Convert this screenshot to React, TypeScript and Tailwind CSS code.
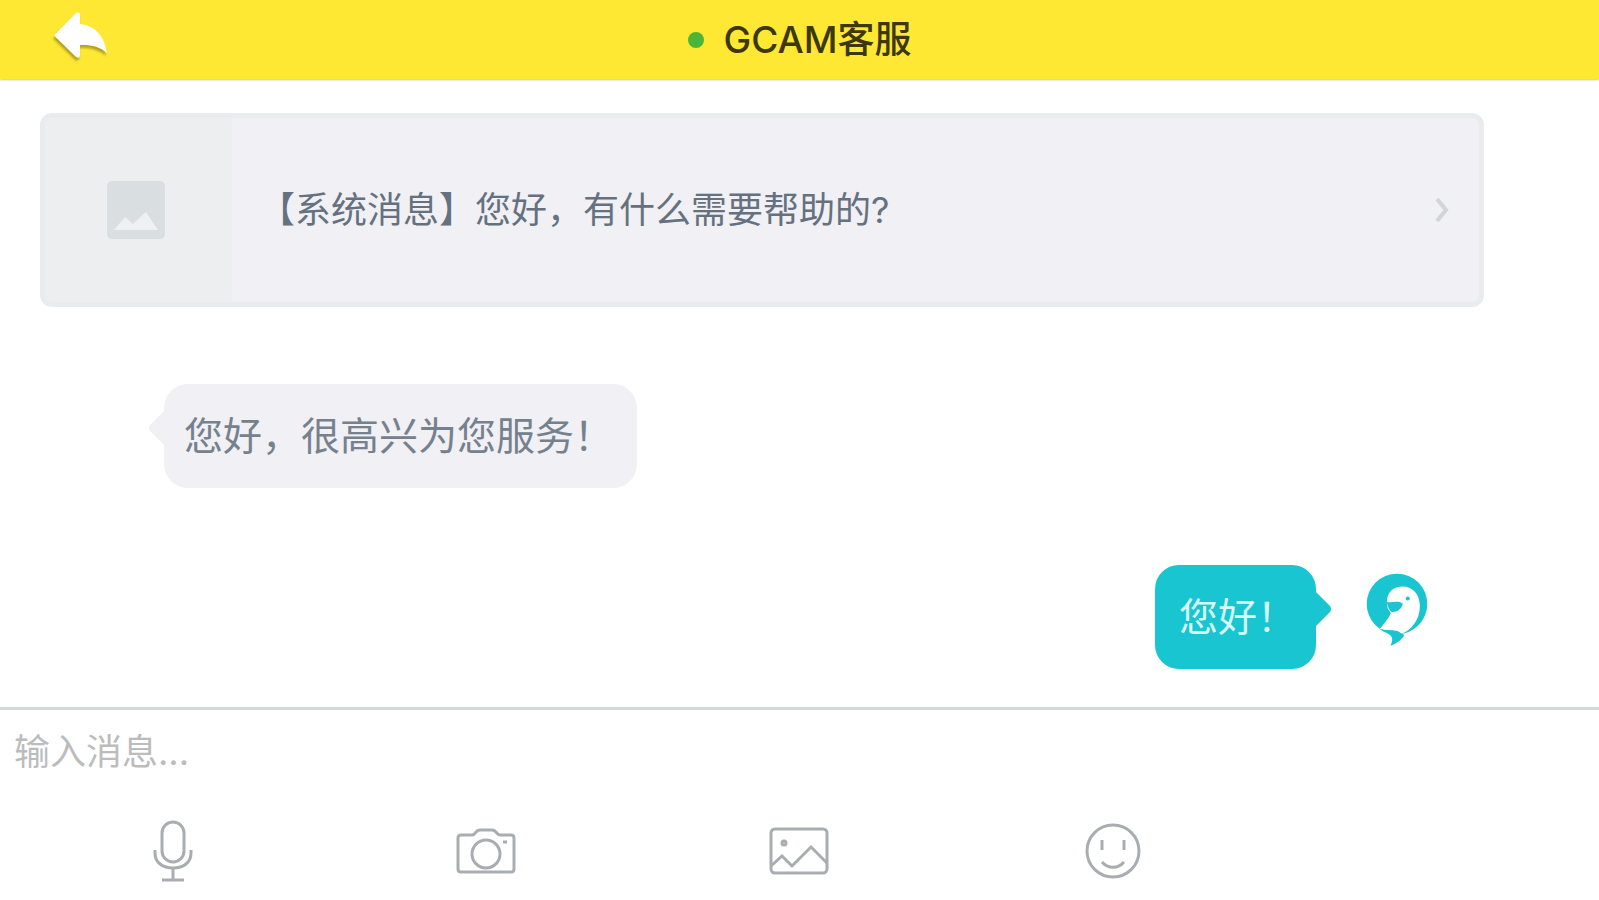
import React, { useState } from 'react';

function ReplyArrowIcon() {
  return (
    <svg viewBox="0 0 54 48" className="w-[54px] h-12 drop-shadow-[-1px_3px_1px_rgba(110,95,0,0.5)]" fill="#fff" aria-hidden="true">
      <path d="M0 23.5 21.5 1.5C24 -.5 26 .5 26 3.500V12C41 13.500 50.500 24 53 41C45.500 34.500 37 32.500 26 33V42.500C26 46 23.500 46.500 21.500 44.500Z" />
    </svg>
  );
}

function PlaceholderIcon() {
  return (
    <svg viewBox="0 0 58 58" className="w-[58px] h-[58px]" aria-hidden="true">
      <rect width="58" height="58" rx="5" fill="#d9dee1" />
      <path d="M7 49 18 36 26 43 39 31 51 49Z" fill="#eef0f2" />
    </svg>
  );
}

function BirdAvatar() {
  return (
    <svg viewBox="18 22 184 220" className="w-[62px] h-[74px] mt-2 shrink-0" role="img" aria-label="avatar">
      <circle cx="110" cy="114" r="90" fill="#18c5d0" />
      {/* head and body */}
      <path
        d="M80 108C80 78 100 62 126 62C158 62 178 86 178 120C178 160 154 192 122 203C112 192 90 194 58 190C70 174 84 160 92 141C84 134 80 122 80 108Z"
        fill="#fff"
      />
      <path d="M40 178 58 190 88 200 80 226 30 214Z" fill="#fff" />
      {/* beak and eye */}
      <path d="M80 108C94 112 112 102 127 113C125 130 110 139 94 138C86 130 81 120 80 108Z" fill="#18c5d0" />
      <circle cx="142" cy="98" r="6" fill="#18c5d0" />
      {/* tail */}
      <path d="M56 186C72 194 92 190 108 194C120 198 124 204 132 206C124 220 108 232 90 238C96 228 98 218 93 210C86 200 68 198 56 186Z" fill="#18c5d0" />
    </svg>
  );
}

const tools = [
  {
    label: '语音',
    icon: (
      <svg viewBox="0 0 40 62" className="w-10 h-[62px]">
        <rect x="9" y="2" width="22" height="40" rx="11" />
        <path d="M2 30V33C2 43 10 48 20 48S38 43 38 33V30M20 48V60M9 60H31" />
      </svg>
    ),
  },
  {
    label: '拍照',
    icon: (
      <svg viewBox="0 0 60 46" className="w-[60px] h-[46px]">
        <path d="M5 7H16C20 7 19 2 24 2H36C41 2 40 7 44 7H55Q58 7 58 10V41Q58 44 55 44H5Q2 44 2 41V10Q2 7 5 7Z" />
        <circle cx="30" cy="26" r="14" />
        <path d="M47 14H51" />
      </svg>
    ),
  },
  {
    label: '图片',
    icon: (
      <svg viewBox="0 0 60 48" className="w-[60px] h-12">
        <rect x="2" y="2" width="56" height="44" rx="4" />
        <path d="M2 39 13 29 23 39 42 20 58 36" />
        <circle cx="15" cy="16" r="2" />
      </svg>
    ),
  },
  {
    label: '表情',
    icon: (
      <svg viewBox="0 0 56 56" className="w-14 h-14">
        <circle cx="28" cy="28" r="26" />
        <path d="M17 17V27M39 17V27M17 39C23 46 33 46 39 39" />
      </svg>
    ),
  },
];

export default function App() {
  const [message, setMessage] = useState('');

  return (
    <div className="min-h-screen flex flex-col bg-white font-[Inter,'Noto_Sans_CJK_SC',sans-serif]">
      {/* Header */}
      <header className="h-[79px] grid grid-cols-[1fr_auto_1fr] items-center bg-[#fee833] shadow-[0_1px_2px_rgba(0,0,0,0.25)]">
        <button type="button" aria-label="返回" className="justify-self-start ml-[54px] mb-2">
          <ReplyArrowIcon />
        </button>
        <div className="flex items-center gap-5">
          <span className="w-4 h-4 rounded-full bg-[#4cb536]" />
          <h1 className="text-[37px] leading-[48px] font-medium text-[#3d370c]">GCAM客服</h1>
        </div>
      </header>

      {/* Messages */}
      <main className="flex-1 flex flex-col gap-[77px] pt-[34px] pl-10 pr-[115px] pb-9">
        <a href="#message" className="flex h-[194px] rounded-xl border-[5px] border-[#e9ebed] bg-[#f0f0f5] overflow-hidden">
          <div className="w-[187px] shrink-0 flex items-center justify-center bg-[#eceef0] pr-[5px]">
            <PlaceholderIcon />
          </div>
          <div className="flex-1 flex items-center justify-between pl-[27px] pr-[30px]">
            <p className="text-[36px] leading-[48px] text-[#65717f]">【系统消息】您好，有什么需要帮助的?</p>
            <svg viewBox="0 0 14 26" className="w-[14px] h-[26px]" fill="none" stroke="#d0d5d8" strokeWidth="4" aria-hidden="true">
              <path d="M2 2 11 13 2 24" />
            </svg>
          </div>
        </a>

        <div className="relative self-start ml-[124px] h-[104px] flex items-center rounded-3xl bg-[#f0f0f5] pl-5 pr-6">
          <svg viewBox="0 0 16 34" className="absolute right-full top-[27px] w-4 h-[34px]" fill="#f0f0f5" aria-hidden="true">
            <path d="M16 0 2 14Q0 17 2 20L16 34Z" />
          </svg>
          <p className="text-[39px] leading-[48px] text-[#75818d]">您好，很高兴为您服务！</p>
        </div>

        <div className="self-end mr-14 flex items-start gap-[50px]">
          <div className="relative h-[104px] flex items-center rounded-3xl bg-[#18c5d0] pl-6 pr-5">
            <svg viewBox="0 0 16 34" className="absolute left-full top-[27px] w-4 h-[34px]" fill="#18c5d0" aria-hidden="true">
              <path d="M0 0 14 14Q16 17 14 20L0 34Z" />
            </svg>
            <p className="text-[39px] leading-[48px] text-[#d9fafb]">您好！</p>
          </div>
          <BirdAvatar />
        </div>
      </main>

      {/* Composer */}
      <footer className="border-t-[3px] border-[#d3d8db]">
        <input
          type="text"
          aria-label="输入消息"
          placeholder="输入消息..."
          value={message}
          onChange={(e) => setMessage(e.target.value)}
          className="block w-full h-[84px] px-[14px] text-[36px] text-[#65717f] placeholder:text-[#bcbcbc] outline-none"
        />
        <div className="grid grid-cols-5 items-center px-4 h-[106px] pt-2">
          {tools.map((tool) => (
            <button
              key={tool.label}
              type="button"
              aria-label={tool.label}
              className="justify-self-center [&>svg]:fill-none [&>svg]:stroke-[#a9adb1] [&>svg]:stroke-3"
            >
              {tool.icon}
            </button>
          ))}
        </div>
      </footer>
    </div>
  );
}
